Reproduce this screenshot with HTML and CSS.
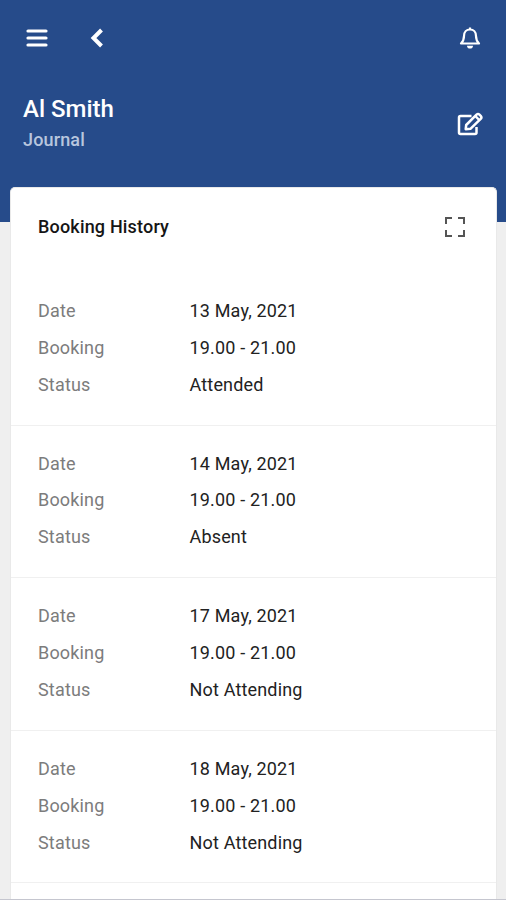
FILE: index.html
```html
<!DOCTYPE html>
<html lang="en">
<head>
<meta charset="utf-8">
<title>Booking History</title>
<link rel="stylesheet" href="styles.css">
</head>
<body>
<div class="screen">
  <header class="header">
    <nav class="toolbar">
      <svg class="menu" viewBox="0 0 22 18"><path d="M2 2H20M2 9H20M2 16H20"/></svg>
      <svg class="back" viewBox="0 0 14 20"><path d="M11.500 2L3.500 10l8 8"/></svg>
      <svg class="bell" viewBox="0 0 22 24"><path d="M2 17.500C4 15.500 5 14 5 10C5 6 7.500 3.500 11 3.500S17 6 17 10C17 14 18 15.500 20 17.500ZM11 3.500V1.500"/><path class="clapper" d="M8 19.700H14A3 2.800 0 0 1 8 19.700Z"/></svg>
    </nav>
    <div class="profile">
      <div>
        <h1 class="name">Al Smith</h1>
        <p class="section">Journal</p>
      </div>
      <svg class="edit" viewBox="0 0 26 24"><path d="M14.500 4H3.500Q2 4 2 5.500V20.500Q2 22 3.500 22H18Q19.500 22 19.500 20.500V15M8.700 17.200L9.200 13L19.500 2.700Q21 1.300 22.500 2.700L23.700 3.900Q25.100 5.400 23.700 6.900L13.400 16.800ZM18.300 4L22.200 8"/></svg>
    </div>
  </header>
  <main class="card">
    <div class="card-head">
      <h2 class="title">Booking History</h2>
      <svg class="expand" viewBox="0 0 20 20"><path d="M1 7V1H7M13 1H19V7M19 13V19H13M7 19H1V13"/></svg>
    </div>
    <dl class="entry"><dt>Date</dt><dd>13 May, 2021</dd><dt>Booking</dt><dd>19.00 - 21.00</dd><dt>Status</dt><dd>Attended</dd></dl>
    <dl class="entry"><dt>Date</dt><dd>14 May, 2021</dd><dt>Booking</dt><dd>19.00 - 21.00</dd><dt>Status</dt><dd>Absent</dd></dl>
    <dl class="entry"><dt>Date</dt><dd>17 May, 2021</dd><dt>Booking</dt><dd>19.00 - 21.00</dd><dt>Status</dt><dd>Not Attending</dd></dl>
    <dl class="entry"><dt>Date</dt><dd>18 May, 2021</dd><dt>Booking</dt><dd>19.00 - 21.00</dd><dt>Status</dt><dd>Not Attending</dd></dl>
  </main>
</div>
</body>
</html>
```
FILE: styles.css
```css
* { box-sizing: border-box; margin: 0; }
body { font-family: Roboto, sans-serif; background: #efefef; }
.screen { height: 900px; overflow: hidden; display: flex; flex-direction: column; border-bottom: 1px solid #c5c6cf; }
svg { fill: none; stroke: #fff; stroke-width: 2; stroke-linejoin: round; flex: none; }
.header { height: 222px; flex: none; background: #264b8a; color: #fff; }
.toolbar { display: flex; align-items: center; height: 75px; padding: 0 25px 0 26px; }
.menu { width: 22px; height: 18px; stroke-width: 3.2; stroke-linecap: round; }
.back { width: 14px; height: 20px; margin-left: 42px; stroke-width: 4; stroke-linejoin: miter; }
.bell { width: 22px; height: 24px; margin-left: auto; stroke-width: 2.2; }
.clapper { fill: #fff; stroke: none; }
.profile { display: flex; justify-content: space-between; align-items: center; height: 98px; padding: 0 23px 0 23px; }
.name { font-size: 24px; line-height: 31px; font-weight: 500; }
.section { font-size: 18px; line-height: 29px; font-weight: 500; letter-spacing: 0.15px; color: #b8c6de; }
.edit { width: 26px; height: 24px; stroke-width: 2.5; }
.card { flex: 1; margin: -35px 9px 0 10px; background: #fff; border: 1px solid #e9e9e9; border-bottom: 0; border-radius: 5px 5px 0 0; }
.card-head { display: flex; justify-content: space-between; align-items: center; height: 78px; padding: 0 31px 0 27px; }
.title { padding-bottom: 2px; font-size: 18px; font-weight: 500; letter-spacing: 0.18px; color: #151515; }
.expand { width: 20px; height: 20px; stroke: #555; stroke-linejoin: miter; }
.entry { display: grid; grid-template-columns: 151.500px 1fr; grid-auto-rows: 36.900px; height: 152.600px; padding: 19px 27px 0; border-bottom: 1px solid #f0f0f0; font-size: 18px; line-height: 37px; letter-spacing: 0.17px; }
.card-head + .entry { margin-top: 7px; }
dt { color: #7c7c7c; }
dd { margin: 0; color: #222; }
```
